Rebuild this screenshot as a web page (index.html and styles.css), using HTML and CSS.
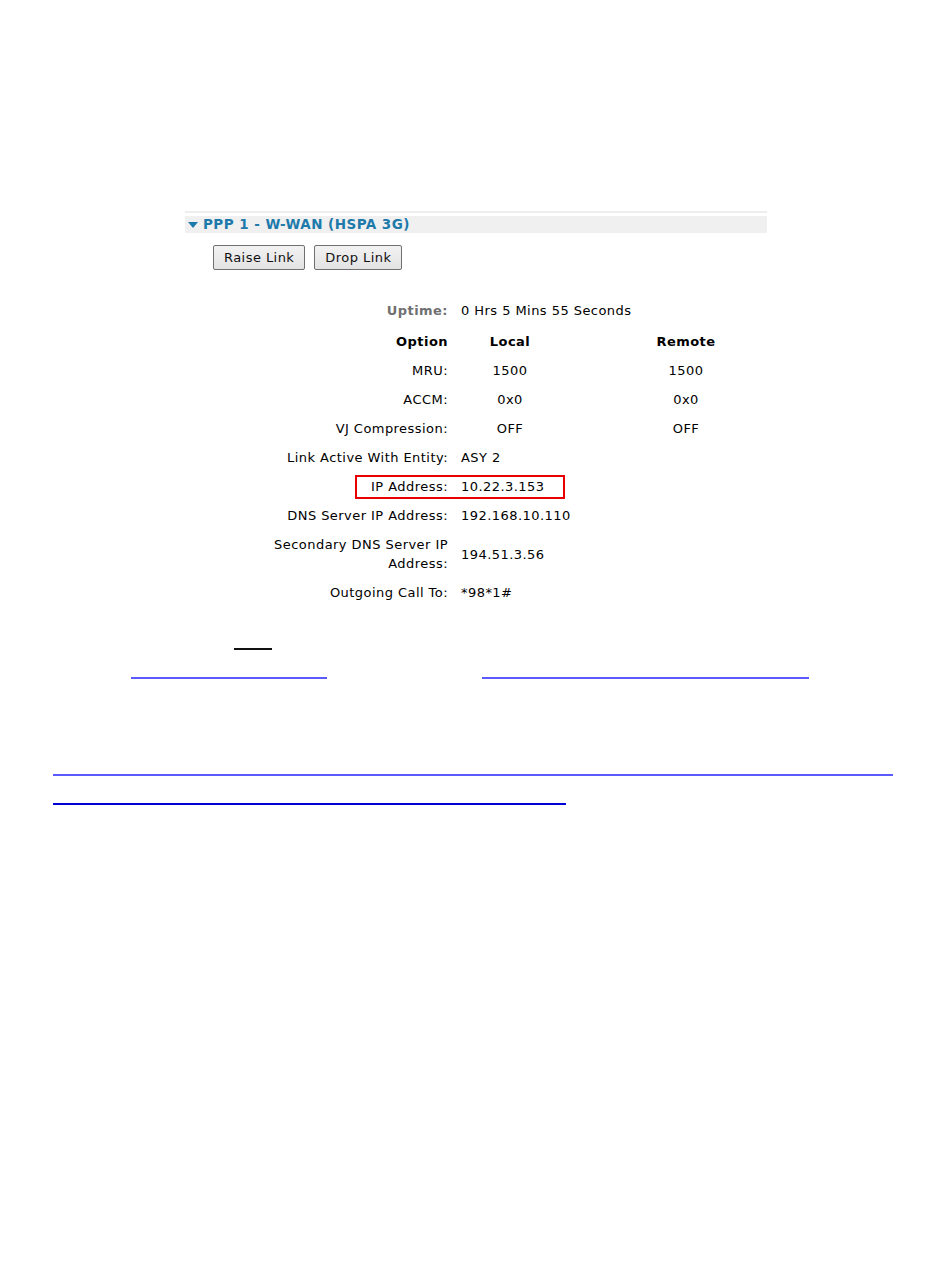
FILE: index.html
```html
<!DOCTYPE html>
<html lang="en">
<head>
  <meta charset="UTF-8" />
  <title>PPP Status</title>
  <link rel="stylesheet" href="styles.css">
</head>
<body>
  <div class="page">

    <div class="panel">
      <div class="panel-rule"></div>
      <div class="panel-head">
        <svg class="caret" width="10" height="8" viewBox="0 0 10 8"><polygon points="0,1 10,1 5,7" fill="#1d7aab"/></svg>
        PPP 1 - W-WAN (HSPA 3G)
      </div>
      <div class="actions">
        <button type="button">Raise Link</button>
        <button type="button">Drop Link</button>
      </div>
    </div>

    <table class="status">
      <tr>
        <td class="label uptime">Uptime:</td>
        <td colspan="2">0 Hrs 5 Mins 55 Seconds</td>
      </tr>
      <tr class="head">
        <td class="label">Option</td>
        <td class="mid">Local</td>
        <td class="mid">Remote</td>
      </tr>
      <tr>
        <td class="label">MRU:</td>
        <td class="mid">1500</td>
        <td class="mid">1500</td>
      </tr>
      <tr>
        <td class="label">ACCM:</td>
        <td class="mid">0x0</td>
        <td class="mid">0x0</td>
      </tr>
      <tr>
        <td class="label">VJ Compression:</td>
        <td class="mid">OFF</td>
        <td class="mid">OFF</td>
      </tr>
      <tr>
        <td class="label">Link Active With Entity:</td>
        <td colspan="2">ASY 2</td>
      </tr>
      <tr>
        <td class="label">IP Address:</td>
        <td colspan="2" class="marked"><span class="callout"></span>10.22.3.153</td>
      </tr>
      <tr>
        <td class="label">DNS Server IP Address:</td>
        <td colspan="2">192.168.10.110</td>
      </tr>
      <tr>
        <td class="label wrap">Secondary DNS Server IP Address:</td>
        <td colspan="2">194.51.3.56</td>
      </tr>
      <tr>
        <td class="label">Outgoing Call To:</td>
        <td colspan="2">*98*1#</td>
      </tr>
    </table>

    <div class="notes">
      <div class="note-row first"><a class="rule dark w-short"></a></div>
      <div class="note-row second">
        <a class="rule w-a"></a>
        <a class="rule w-b"></a>
      </div>
      <div class="note-row third"><a class="rule w-full"></a></div>
      <div class="note-row fourth"><a class="rule deep w-half"></a></div>
    </div>

  </div>
</body>
</html>
```

FILE: styles.css
```css
body {
  margin: 0;
  background: #fff;
  font-family: "DejaVu Sans", Verdana, sans-serif;
  font-size: 13px;
  letter-spacing: 0.45px;
  color: #000;
}
.page {
  width: 950px;
  padding-top: 211px;
}

/* panel header */
.panel {
  margin-left: 185px;
  width: 582px;
}
.panel-rule {
  height: 2px;
  background: #eeeeee;
}
.panel-head {
  margin-top: 3px;
  height: 17px;
  line-height: 17px;
  background: #f0f0f0;
  color: #1d7aab;
  font-weight: bold;
  font-size: 13.5px;
  display: flex;
  align-items: center;
  gap: 5px;
  padding-left: 3px;
}
.caret {
  display: block;
}
.actions {
  display: flex;
  gap: 9px;
  margin: 12px 0 0 28px;
}
.actions button {
  font-family: inherit;
  font-size: 13px;
  letter-spacing: 0.45px;
  height: 25px;
  padding: 0 10px;
  border: 1px solid #707070;
  border-radius: 2px;
  background: linear-gradient(#f2f2f2, #e3e3e3);
  color: #111;
  cursor: pointer;
}

/* status table */
.status {
  margin: 26px 0 0 185px;
  border-collapse: collapse;
}
.status td {
  padding: 5px 0;
  line-height: 19px;
  vertical-align: middle;
}
.status td.label {
  width: 263px;
  padding-right: 13px;
  text-align: right;
}
.status td.label.wrap {
  padding-left: 78px;
  width: 185px;
}
.status td.mid {
  text-align: center;
  width: 98px;
}
.status td.mid + td.mid {
  width: 254px;
}
.status .uptime {
  color: #707070;
  font-weight: bold;
}
.status .head td {
  font-weight: bold;
  padding-top: 7px;
}
.marked {
  position: relative;
}
.callout {
  position: absolute;
  left: -106px;
  top: 3px;
  width: 206px;
  height: 20px;
  border: 2px solid #e80000;
}

/* empty link lines below */
.notes {
  padding-top: 41px;
}
.note-row {
  display: flex;
  height: 2px;
}
.rule {
  display: block;
  height: 2px;
  background: #5a5aff;
}
.rule.dark {
  background: #111;
}
.rule.deep {
  background: #0000d8;
}
.first { padding-left: 234px; }
.second { padding-left: 131px; gap: 155px; margin-top: 27px; }
.third { padding-left: 53px; margin-top: 95px; }
.fourth { padding-left: 53px; margin-top: 27px; }
.w-short { width: 38px; }
.w-a { width: 196px; }
.w-b { width: 327px; }
.w-full { width: 840px; }
.w-half { width: 513px; }
```
